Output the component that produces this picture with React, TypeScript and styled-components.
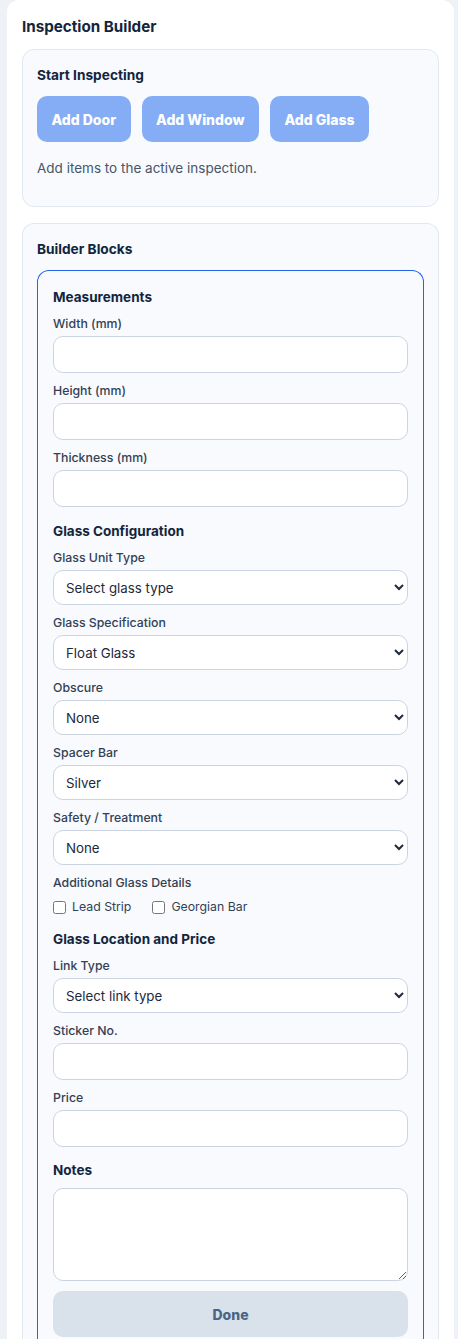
import React from 'react';
import styled, { createGlobalStyle } from 'styled-components';

const GlobalStyle = createGlobalStyle`
  body {
    margin: 0;
    background: #eef1f5;
    font-family: Inter, "Noto Sans", sans-serif;
    color: #0f2740;
  }
  * { box-sizing: border-box; }
`;

const Page = styled.div`
  padding: 0 4px 0 7px;
`;

const Shell = styled.div`
  background: #ffffff;
  border-radius: 12px 12px 0 0;
  padding: 17px 15px 0;
  display: flex;
  flex-direction: column;
  gap: 16px;
`;

const Title = styled.h1`
  margin: 0 0 -4px;
  font-size: 15.2px;
  line-height: 20px;
  font-weight: 700;
  color: #12253d;
`;

const Panel = styled.section<{ $open?: boolean }>`
  background: #f8fafd;
  border: 1px solid #e2e8f0;
  border-bottom: ${p => (p.$open ? 'none' : '1px solid #e2e8f0')};
  border-radius: ${p => (p.$open ? '12px 12px 0 0' : '12px')};
  padding: 15px 14px ${p => (p.$open ? 0 : 15)}px;
  display: flex;
  flex-direction: column;
`;

const PanelTitle = styled.h2`
  margin: 0 0 11px;
  font-size: 13.7px;
  line-height: 20px;
  font-weight: 700;
  color: #12253d;
`;

const ButtonRow = styled.div`
  display: flex;
  gap: 11px;
`;

const AddButton = styled.button`
  height: 46px;
  padding: 0 14.5px;
  border: none;
  border-radius: 10px;
  background: #85adf5;
  color: #ffffff;
  font-family: inherit;
  font-size: 14px;
  font-weight: 800;
`;

const Hint = styled.p`
  margin: 16px 0 13px;
  font-size: 13.5px;
  line-height: 20px;
  color: #475569;
`;

const Block = styled.div`
  border: 1px solid #2563eb;
  border-bottom: none;
  border-radius: 12px 12px 0 0;
  padding: 16px 15px 2px;
  display: flex;
  flex-direction: column;
`;

const SectionHeading = styled.h3<{ $top?: number }>`
  margin: ${p => p.$top ?? 0}px 0 8px;
  font-size: 13.5px;
  line-height: 20px;
  font-weight: 700;
  color: #12253d;
`;

const Field = styled.div<{ $tight?: boolean }>`
  display: flex;
  flex-direction: column;
  gap: 3px;
  margin-bottom: ${p => (p.$tight ? 6 : 9)}px;
`;

const Label = styled.label`
  font-size: 12.3px;
  line-height: 18px;
  font-weight: 500;
  color: #334155;
`;

const TextInput = styled.input`
  height: 37px;
  width: 100%;
  border: 1px solid #cbd5e1;
  border-radius: 10px;
  background: #ffffff;
  padding: 0 12px;
  font-family: inherit;
  font-size: 13.3px;
`;

const Select = styled.select`
  height: 35px;
  width: 100%;
  border: 1px solid #cbd5e1;
  border-radius: 10px;
  background: #ffffff;
  padding: 0 8px 0 8px;
  font-family: inherit;
  font-size: 13.3px;
  color: #1e293b;
`;

const CheckRow = styled.div`
  display: flex;
  gap: 21px;
  margin-bottom: 13px;
`;

const CheckLabel = styled.label`
  display: flex;
  align-items: center;
  gap: 6px;
  font-size: 12.3px;
  line-height: 18px;
  color: #334155;

  input {
    margin: 0;
    width: 13px;
    height: 13px;
  }
`;

const NotesArea = styled.textarea`
  height: 93px;
  width: 100%;
  border: 1px solid #cbd5e1;
  border-radius: 10px;
  background: #ffffff;
  font-family: inherit;
  resize: vertical;
  margin-bottom: 10px;
`;

const DoneButton = styled.button`
  height: 46px;
  width: 100%;
  border: none;
  border-radius: 10px;
  background: #d9e1eb;
  color: #4b6584;
  font-family: inherit;
  font-size: 14px;
  font-weight: 800;
`;

const InputField = ({ label }: { label: string }) => (
  <Field>
    <Label>{label}</Label>
    <TextInput type="text" />
  </Field>
);

const SelectField = ({ label, value }: { label: string; value: string }) => (
  <Field>
    <Label>{label}</Label>
    <Select defaultValue={value}>
      <option value={value}>{value}</option>
    </Select>
  </Field>
);

export default function App() {
  return (
    <Page>
      <GlobalStyle />
      <Shell>
        <Title>Inspection Builder</Title>
        <Panel>
          <PanelTitle>Start Inspecting</PanelTitle>
          <ButtonRow>
            <AddButton>Add Door</AddButton>
            <AddButton>Add Window</AddButton>
            <AddButton>Add Glass</AddButton>
          </ButtonRow>
          <Hint>Add items to the active inspection.</Hint>
        </Panel>
        <Panel $open>
          <PanelTitle>Builder Blocks</PanelTitle>
          <Block>
            <SectionHeading>Measurements</SectionHeading>
            <InputField label="Width (mm)" />
            <InputField label="Height (mm)" />
            <InputField label="Thickness (mm)" />

            <SectionHeading $top={5}>Glass Configuration</SectionHeading>
            <SelectField label="Glass Unit Type" value="Select glass type" />
            <SelectField label="Glass Specification" value="Float Glass" />
            <SelectField label="Obscure" value="None" />
            <SelectField label="Spacer Bar" value="Silver" />
            <SelectField label="Safety / Treatment" value="None" />
            <Field $tight>
              <Label>Additional Glass Details</Label>
            </Field>
            <CheckRow>
              <CheckLabel><input type="checkbox" />Lead Strip</CheckLabel>
              <CheckLabel><input type="checkbox" />Georgian Bar</CheckLabel>
            </CheckRow>

            <SectionHeading>Glass Location and Price</SectionHeading>
            <SelectField label="Link Type" value="Select link type" />
            <InputField label="Sticker No." />
            <InputField label="Price" />

            <SectionHeading $top={4}>Notes</SectionHeading>
            <NotesArea />
            <DoneButton>Done</DoneButton>
          </Block>
        </Panel>
      </Shell>
    </Page>
  );
}
